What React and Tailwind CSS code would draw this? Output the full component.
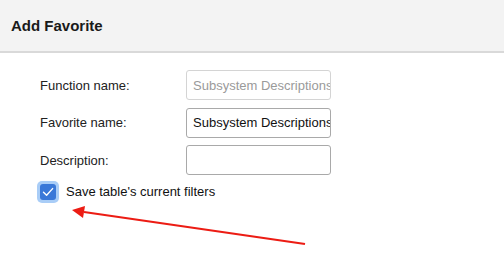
import React from 'react';

const rows = [
  { label: 'Function name:', value: 'Subsystem Descriptions', disabled: true },
  { label: 'Favorite name:', value: 'Subsystem Descriptions' },
  { label: 'Description:', value: '' },
];

const App = () => {
  return (
    <div className="relative w-[504px] h-[259px] bg-white overflow-hidden font-['Liberation_Sans',Arial,sans-serif]">
      <div className="h-[51px] bg-[#f3f3f3] border-b-2 border-[#d9d9d9] flex items-center px-[11px] box-content">
        <h1 className="text-[15px] font-bold text-[#1a1a1a] pt-[1px]">Add Favorite</h1>
      </div>

      <div className="pt-[17px] pl-[40px] flex flex-col gap-[7.5px]">
        {rows.map((row) => (
          <div key={row.label} className="flex items-center h-[30px]">
            <label className="w-[146px] text-[13px] text-[#222] pt-[1px]">{row.label}</label>
            <input
              readOnly
              value={row.value}
              className={`w-[145px] h-[30px] pl-[6px] pr-0 text-[13px] rounded-[3px] border outline-none overflow-hidden ${
                row.disabled ? 'border-[#d4d4d4] text-[#9a9a9a]' : 'border-[#a9a9a9] text-[#111]'
              }`}
            />
          </div>
        ))}

        <div className="flex items-center gap-[7px] -ml-[3px] mt-[-2px]">
          <div className="w-[22px] h-[22px] rounded-[5px] bg-[#a9cdf7] flex items-center justify-center">
            <div className="w-[16px] h-[16px] rounded-[3px] bg-[#3a78d8] flex items-center justify-center">
              <svg width="12" height="12" viewBox="0 0 12 12" fill="none">
                <path d="M1.5 6.2 L4.6 9.2 L10.6 2.6" stroke="white" strokeWidth="1.4" strokeLinecap="round" strokeLinejoin="round" />
              </svg>
            </div>
          </div>
          <span className="text-[13px] text-[#111]">Save table's current filters</span>
        </div>
      </div>

      <svg className="absolute left-0 top-0 pointer-events-none" width="504" height="259">
        <line x1="305" y1="244" x2="84" y2="212" stroke="#ec1c14" strokeWidth="2.2" />
        <polygon points="72,210 85,206 83,218" fill="#ec1c14" />
      </svg>
    </div>
  );
};

export default App;
